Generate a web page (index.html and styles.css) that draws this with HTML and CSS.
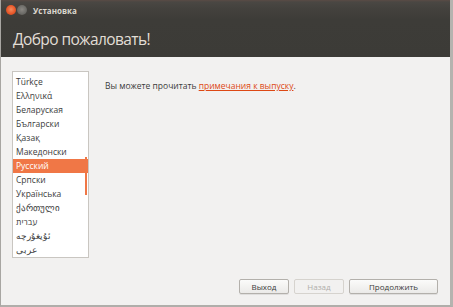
FILE: index.html
```html
<!DOCTYPE html>
<html lang="ru">
<head>
<meta charset="utf-8">
<title>Установка</title>
<link rel="stylesheet" href="styles.css">
</head>
<body>
<div class="window">
  <div class="header">
    <div class="titlebar">
      <span class="btn-close"></span>
      <span class="btn-min"></span>
      <span class="title">Установка</span>
    </div>
    <h1 class="heading">Добро пожаловать!</h1>
  </div>
  <div class="content">
    <div class="main">
      <div class="listbox">
        <ul class="langs">
          <li>Türkçe</li>
          <li>Ελληνικά</li>
          <li>Беларуская</li>
          <li>Български</li>
          <li>Қазақ</li>
          <li>Македонски</li>
          <li class="selected">Русский</li>
          <li>Српски</li>
          <li>Українська</li>
          <li>ქართული</li>
          <li>עברית</li>
          <li>ئۇيغۇرچە</li>
          <li>عربى</li>
        </ul>
        <span class="thumb"></span>
      </div>
      <p class="note">Вы можете прочитать <a href="#">примечания к выпуску</a>.</p>
    </div>
    <div class="buttons">
      <button class="button">Выход</button>
      <button class="button disabled">Назад</button>
      <button class="button wide">Продолжить</button>
    </div>
  </div>
</div>
</body>
</html>
```
FILE: styles.css
```css
* { box-sizing: border-box; }
html, body { margin: 0; padding: 0; }
body {
  width: 453px;
  height: 307px;
  overflow: hidden;
  font-family: "Open Sans", "Noto Sans", sans-serif;
  background: #f2f1f0;
}
.window {
  width: 453px;
  height: 307px;
  display: flex;
  flex-direction: column;
  border-left: 1px solid #a8a6a2;
  border-right: 3px solid #b5b3af;
  border-bottom: 2px solid #b0aeaa;
  background: #f2f1f0;
}
.header {
  height: 57px;
  background: linear-gradient(#5a4b45 0, #4a4743 2px, #44423e 8px, #3d3c38 20px, #3c3b37 100%);
  color: #dfdbd2;
  flex: none;
}
.titlebar {
  height: 20px;
  display: flex;
  align-items: center;
  padding-left: 5px;
}
.btn-close {
  width: 10px; height: 10px; border-radius: 50%;
  background: radial-gradient(circle at 50% 45%, #f58a5c 0, #e8582a 55%, #b9401c 100%);
}
.btn-min {
  width: 10px; height: 10px; border-radius: 50%;
  margin-left: 1px;
  background: radial-gradient(circle at 50% 45%, #8a8883 0, #6b6a66 60%, #55544f 100%);
}
.title {
  margin-left: 6px;
  font-size: 8px;
  font-weight: 700;
  color: #dcd8cf;
}
.heading {
  margin: 7px 0 0 12px;
  font-size: 15.5px;
  letter-spacing: -0.6px;
  font-weight: 400;
  line-height: 24px;
  color: #e2ded6;
}
.content {
  flex: 1;
  display: flex;
  flex-direction: column;
  padding: 14px 11px 0 11px;
}
.main {
  display: flex;
  align-items: flex-start;
  flex: 1;
}
.listbox {
  position: relative;
  width: 77px;
  height: 187px;
  border: 1px solid #c9c6c1;
  background: #ffffff;
  overflow: hidden;
  flex: none;
}
.langs {
  list-style: none;
  margin: 0;
  padding: 3px 0 0 0;
  font-size: 8.5px;
  color: #3c3c3c;
}
.langs li {
  height: 14px;
  line-height: 14px;
  padding-left: 3px;
  white-space: nowrap;
}
.langs li.selected {
  background: #f07746;
  color: #ffffff;
}
.thumb {
  position: absolute;
  right: 1px;
  top: 85px;
  width: 2px;
  height: 38px;
  background: #f07746;
}
.note {
  margin: 9px 0 0 16px;
  font-size: 8.5px;
  color: #3c3c3c;
  line-height: 12px;
}
.note a {
  color: #dd4814;
  text-decoration: underline;
}
.buttons {
  display: flex;
  justify-content: flex-end;
  gap: 5px;
  padding: 0 1px 11px 0;
  flex: none;
}
.button {
  height: 15px;
  width: 50px;
  padding: 0;
  border: 1px solid #b3b0ab;
  border-radius: 2px;
  background: linear-gradient(#fbfbfa, #ebeae8);
  font-family: "Open Sans", "Noto Sans", sans-serif;
  font-size: 8px;
  color: #3c3c3c;
  box-shadow: 0 1px 0 rgba(0,0,0,0.08);
}
.button.disabled {
  color: #b0aeaa;
  border-color: #d6d3ce;
  background: #f2f1f0;
  box-shadow: none;
}
.button.wide {
  width: 89px;
}
```
